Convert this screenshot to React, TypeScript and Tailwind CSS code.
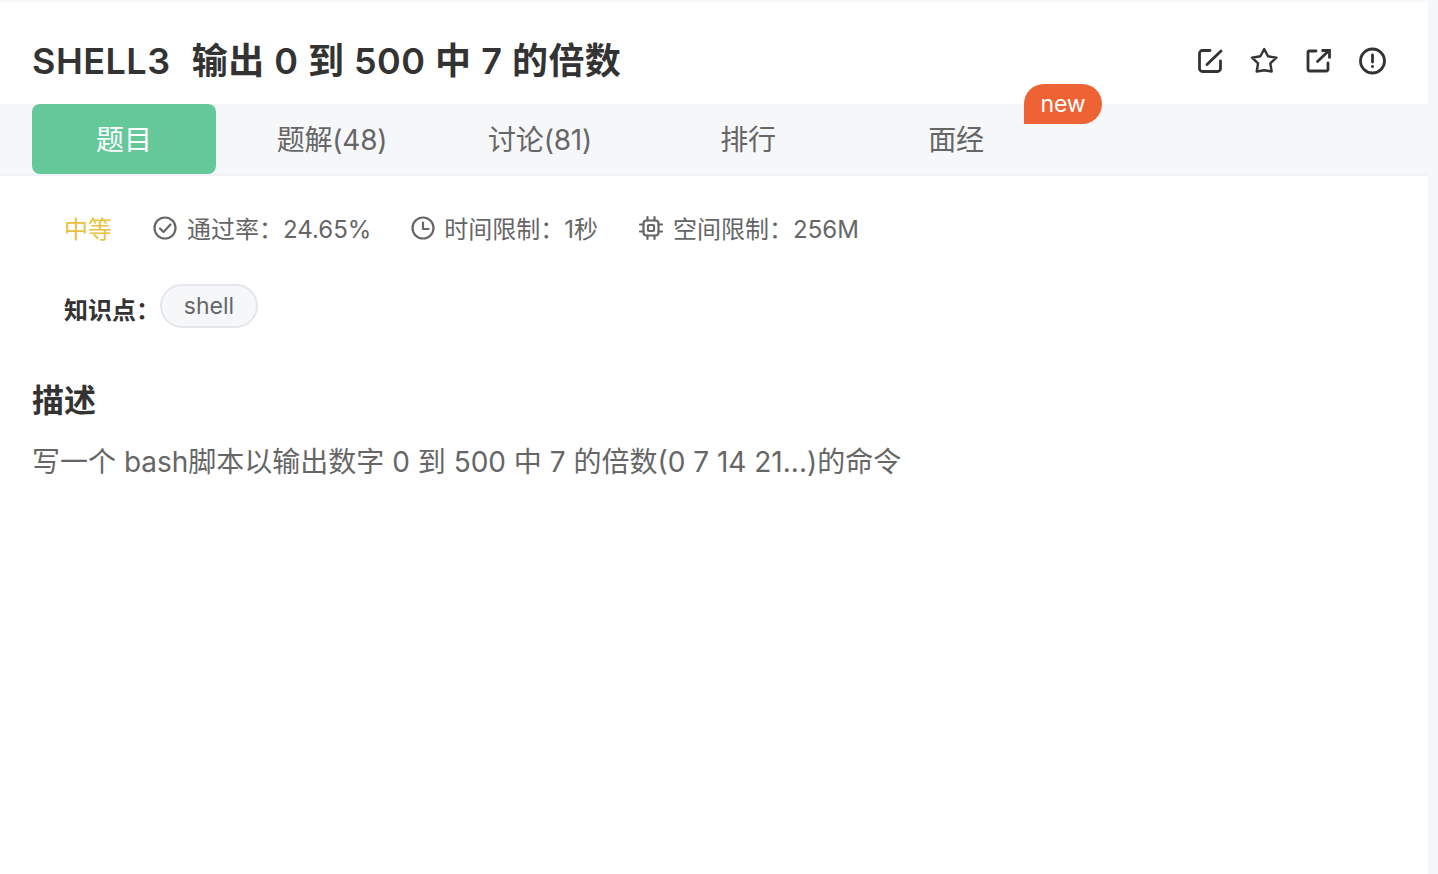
const FONT = '[font-family:Inter,"Noto_Sans_CJK_SC",sans-serif]';

function HeaderIcon({ children }: { children: React.ReactNode }) {
  return (
    <svg width="30" height="30" viewBox="0 0 30 30" fill="none" stroke="#333333" strokeWidth="2.8" strokeLinecap="round" strokeLinejoin="round">
      {children}
    </svg>
  );
}

function MetaIcon({ children }: { children: React.ReactNode }) {
  return (
    <svg width="26" height="26" viewBox="0 0 26 26" fill="none" stroke="#666666" strokeWidth="2.2" strokeLinecap="round" strokeLinejoin="round" className="mt-[-4px] shrink-0">
      {children}
    </svg>
  );
}

const tabs = ['题目', '题解(48)', '讨论(81)', '排行', '面经'];

export default function App() {
  return (
    <div className={`${FONT} min-h-[874px] bg-[#f6f7f9] pt-[2px] pr-[10px]`}>
      <div className="min-h-[872px] bg-white">
        <div className="flex h-[102px] items-center justify-between pl-[32px] pr-[41px]">
          <h1 className="mt-[16px] whitespace-pre text-[36px] font-semibold leading-[44px] tracking-[0.48px] text-[#333333]">
            SHELL3  <span className="ml-[2px]">输出 0 到 500 中 7 的倍数</span>
          </h1>
          <div className="mt-[15px] flex gap-[24px]">
            <HeaderIcon>
              <path d="M15 4.5H7.5a3 3 0 0 0-3 3v15a3 3 0 0 0 3 3h15a3 3 0 0 0 3-3V15" />
              <path d="M12 18.5 26 5" />
            </HeaderIcon>
            <HeaderIcon>
              <path d="M15.2 3l3.8 7.3 8.4 1.4-6.1 5.6 1.4 8.2-7.5-1.2-7.5 1.2 1.4-8.2-6.1-5.6 8.4-1.4z" strokeWidth="2.4" />
            </HeaderIcon>
            <HeaderIcon>
              <path d="M13 5H6.5A1.5 1.5 0 0 0 5 6.5v17A1.5 1.5 0 0 0 6.5 25h17a1.5 1.5 0 0 0 1.5-1.5V17" />
              <path d="M14.5 15.5 26 4.5" />
              <path d="M18.5 4.5h8v8" strokeLinecap="butt" strokeLinejoin="miter" />
            </HeaderIcon>
            <HeaderIcon>
              <circle cx="15.5" cy="15" r="12" />
              <path d="M15.5 9v7" />
              <path d="M15.5 20.5v.2" />
            </HeaderIcon>
          </div>
        </div>

        <div className="relative flex h-[72px] gap-[24px] border-b-2 border-[#f1f2f5] bg-[#f6f7f9] pl-[32px]">
          {tabs.map((tab, i) => (
            <div
              key={tab}
              className={
                i === 0
                  ? 'flex h-[70px] w-[184px] items-center justify-center rounded-[8px] bg-[#64c89b] pt-[1px] text-[28px] text-white'
                  : 'relative flex h-[70px] w-[184px] items-center justify-center pt-[1px] text-[28px] tracking-[-0.2px] text-[#666666]'
              }
            >
              {tab}
              {tab === '面经' && (
                <span className="absolute left-[160px] top-[-20px] flex h-[40px] w-[78px] items-center justify-center rounded-t-[20px] rounded-br-[20px] bg-[#ee6334] text-[23px] text-white">
                  new
                </span>
              )}
            </div>
          ))}
        </div>

        <div className="flex items-center pl-[64px] pt-[39px] text-[24px] leading-[30px] text-[#666666]">
          <span className="mr-[40px] text-[#e8c23f]">中等</span>
          <MetaIcon>
            <circle cx="13" cy="13" r="10.5" />
            <path d="M8 13.5l3.5 3.5 7-7.5" />
          </MetaIcon>
          <span className="ml-[9px] mr-[39px]">通过率：24.65%</span>
          <MetaIcon>
            <circle cx="13" cy="13" r="10.5" />
            <path d="M13 7.5V14h5.5" />
          </MetaIcon>
          <span className="ml-[8px] mr-[40px]">时间限制：1秒</span>
          <MetaIcon>
            <rect x="5.5" y="5.5" width="15" height="15" rx="3" />
            <rect x="10" y="10" width="6" height="6" rx="1" />
            <path d="M9.5 2v3.5M16.5 2v3.5M9.5 20.5V24M16.5 20.5V24M2 9.5h3.5M2 16.5h3.5M20.5 9.5H24M20.5 16.5H24" />
          </MetaIcon>
          <span className="ml-[9px]">空间限制：256M</span>
        </div>

        <div className="mt-[39px] flex items-center pl-[64px]">
          <span className="mt-[10px] w-[96px] text-[24px] font-semibold leading-[30px] text-[#333333]">知识点：</span>
          <span className="flex h-[44px] w-[98px] items-center justify-center rounded-full border-2 border-[#e4e6eb] bg-[#f6f7f9] text-[23px] text-[#666666]">
            shell
          </span>
        </div>

        <h2 className="mt-[53px] pl-[32px] text-[32px] font-semibold leading-[40px] text-[#333333]">描述</h2>
        <p className="mt-[21px] pl-[32px] text-[28px] leading-[40px] text-[#666666]">
          写一个 bash脚本以输出数字 0 到 500 中 7 的倍数(0 7 14 21...)的命令
        </p>
      </div>
    </div>
  );
}
